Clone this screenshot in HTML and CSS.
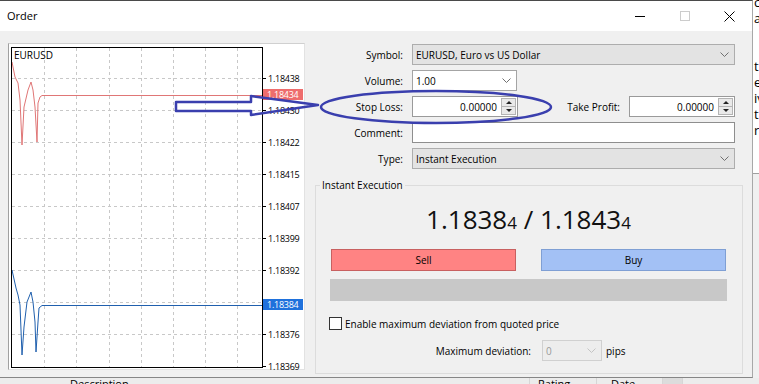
FILE: index.html
```html
<!DOCTYPE html>
<html>

<head>
    <title>Order</title>
    <meta charset=utf-8>
    <meta name=viewport content="width=device-width, initial-scale=1">

    <link rel="stylesheet" href="styles.css">
</head>

<body>
    <div class="desktop">
        <div class="dialog">
            <div class="titlebar">
                <span class="title">Order</span>
                <div class="caption">
                    <span class="cap-btn">
                        <svg width="10" height="10" viewBox="0 0 10 10"><path d="M0 5.5h10" stroke="#000" stroke-width="1"/></svg>
                    </span>
                    <span class="cap-btn">
                        <svg width="10" height="10" viewBox="0 0 10 10"><rect x="0.5" y="0.5" width="9" height="9" fill="none" stroke="#cccccc"/></svg>
                    </span>
                    <span class="cap-btn">
                        <svg width="11" height="11" viewBox="0 0 11 11"><path d="M0.5 0.5l10 10M10.5 0.5l-10 10" stroke="#000" stroke-width="1"/></svg>
                    </span>
                </div>
            </div>

            <div class="content">
                <div class="chart-panel">
                    <div class="chart-frame">
                        <svg class="chart" width="252" height="321" viewBox="0 0 252 321">
                            <g stroke="#c8c8c8" stroke-dasharray="3 3" stroke-width="1">
                                <path d="M33.5 1v319M65.5 1v319M98.5 1v319M130.5 1v319M162.5 1v319M194.5 1v319M226.5 1v319"/>
                                <path d="M1 31.5h250M1 63.5h250M1 95.5h250M1 127.5h250M1 159.5h250M1 191.5h250M1 223.5h250M1 255.5h250M1 287.5h250"/>
                            </g>
                            <polyline fill="none" stroke="#e07676" stroke-width="1"
                                points="1,15 4,30 7,36 9,53 11,98 13,60 17,43 20,35 22,43 24,60 26,95 27,56 29,50 31,48.5 251,48.5"/>
                            <polyline fill="none" stroke="#2060ae" stroke-width="1"
                                points="1,223 5,241 7,248 9,258 11,308 13,280 16,255 20,245 22,255 24,275 25,305 27,275 28,261 31,258.5 251,258.5"/>
                            <rect x="0.5" y="0.5" width="251" height="320" fill="none" stroke="#000"/>
                        </svg>
                        <span class="symbol-name">EURUSD</span>
                    </div>
                    <div class="price-axis">
                        <div class="tick-label"><i></i>1.18438</div>
                        <div class="tick-label"><i></i>1.18430</div>
                        <div class="tick-label"><i></i>1.18422</div>
                        <div class="tick-label"><i></i>1.18415</div>
                        <div class="tick-label"><i></i>1.18407</div>
                        <div class="tick-label"><i></i>1.18399</div>
                        <div class="tick-label"><i></i>1.18392</div>
                        <div class="tick-label"><i></i>1.18384</div>
                        <div class="tick-label"><i></i>1.18376</div>
                        <div class="tick-label"><i></i>1.18369</div>
                        <span class="tag tag-ask">1.18434</span>
                        <span class="tag tag-bid">1.18384</span>
                    </div>
                </div>

                <div class="order-form">
                    <div class="fields">
                        <span class="lbl">Symbol:</span>
                        <div class="combo">
                            <span>EURUSD, Euro vs US Dollar</span>
                            <svg class="chev" width="9" height="5" viewBox="0 0 9 5"><path d="M0.5 0.5l4 4 4-4" fill="none" stroke="#707070"/></svg>
                        </div>

                        <span class="lbl">Volume:</span>
                        <div class="combo combo-edit volume">
                            <span>1.00</span>
                            <svg class="chev" width="9" height="5" viewBox="0 0 9 5"><path d="M0.5 0.5l4 4 4-4" fill="none" stroke="#707070"/></svg>
                        </div>

                        <span class="lbl">Stop Loss:</span>
                        <div class="pair-row">
                            <div class="spin-edit">
                                <span class="value">0.00000</span>
                                <div class="spinner"><span class="spin-btn"><b class="up"></b></span><span class="spin-btn"><b class="down"></b></span></div>
                            </div>
                            <div class="tp-group">
                                <span class="lbl">Take Profit:</span>
                                <div class="spin-edit">
                                    <span class="value">0.00000</span>
                                    <div class="spinner"><span class="spin-btn"><b class="up"></b></span><span class="spin-btn"><b class="down"></b></span></div>
                                </div>
                            </div>
                        </div>

                        <span class="lbl">Comment:</span>
                        <div class="edit"></div>

                        <span class="lbl">Type:</span>
                        <div class="combo">
                            <span>Instant Execution</span>
                            <svg class="chev" width="9" height="5" viewBox="0 0 9 5"><path d="M0.5 0.5l4 4 4-4" fill="none" stroke="#707070"/></svg>
                        </div>
                    </div>

                    <fieldset class="exec-group">
                        <legend>Instant Execution</legend>
                        <div class="quote">1.1838<small>4</small> / 1.1843<small>4</small></div>
                        <div class="trade-buttons">
                            <div class="btn btn-sell">Sell</div>
                            <div class="btn btn-buy">Buy</div>
                        </div>
                        <div class="status-bar"></div>
                        <div class="check-row"><span class="checkbox"></span>Enable maximum deviation from quoted price</div>
                        <div class="deviation-row">
                            <span class="dev-label">Maximum deviation:</span>
                            <div class="combo combo-off">
                                <span>0</span>
                                <svg class="chev" width="9" height="5" viewBox="0 0 9 5"><path d="M0.5 0.5l4 4 4-4" fill="none" stroke="#c4c4c4"/></svg>
                            </div>
                            <span>pips</span>
                        </div>
                    </fieldset>
                </div>
            </div>
        </div>

        <div class="side-window">
            <div class="side-doc">c<br>a<br><br><br>t<br>e<br>iv<br>tc<br>rr</div>
        </div>

        <div class="bottom-window">
            <span class="col col-desc">Description</span>
            <span class="col col-rating">Rating</span>
            <span class="col col-date">Date &#8964;</span>
            <span class="col col-box"></span>
        </div>

        <!-- hand drawn marks over the screenshot -->
        <svg class="marks" width="759" height="384" viewBox="0 0 759 384">
            <polygon points="176,102 251,102 251,96 318,105 251,115 251,111 176,111"
                fill="none" stroke="#3a3fae" stroke-width="2.5" stroke-linejoin="round"/>
            <ellipse cx="436" cy="107" rx="115" ry="16" fill="none" stroke="#3a3fae" stroke-width="2.5"/>
        </svg>
    </div>
</body>

</html>
```

FILE: styles.css
```css
body {
    margin: 0;
    font-family: "Open Sans", "Noto Sans", sans-serif;
    font-size: 10px;
    color: #000;
    background: #f0f0f0;
}

.desktop {
    position: relative;
    width: 759px;
    height: 384px;
    overflow: hidden;
    display: grid;
    grid-template-columns: 753px 6px;
    grid-template-rows: 378px 6px;
}

/* dialog window */
.dialog {
    box-sizing: border-box;
    border-top: 1px solid #4a4a4a;
    border-right: 1px solid #a8a8a8;
    border-bottom: 1px solid #868686;
    display: flex;
    flex-direction: column;
    background: #f0f0f0;
}

.titlebar {
    height: 30px;
    background: #fff;
    display: flex;
    align-items: center;
    justify-content: space-between;
    padding-left: 7px;
}

.title {
    font-size: 11px;
    line-height: 14px;
}

.caption {
    display: flex;
    height: 100%;
}

.cap-btn {
    width: 45px;
    height: 100%;
    display: flex;
    align-items: center;
    justify-content: center;
}

.content {
    flex: 1;
    display: flex;
    padding: 12px 0 0 8px;
}

/* chart */
.chart-panel {
    box-sizing: border-box;
    width: 297px;
    height: 327px;
    background: #fff;
    border: 1px solid #e2e2e2;
    border-left-color: #a0a0a0;
    border-top-color: #d0d0d0;
    display: flex;
    padding: 3px 0 0 2px;
}

.chart-frame {
    position: relative;
    width: 252px;
    height: 321px;
}

.chart {
    display: block;
}

.symbol-name {
    position: absolute;
    left: 3px;
    top: 2px;
    font-size: 10px;
    line-height: 12px;
}

.price-axis {
    position: relative;
    flex: 1;
    padding-top: 15px;
    font-size: 9px;
    letter-spacing: -0.25px;
}

.tick-label {
    height: 32px;
    display: flex;
    align-items: center;
    gap: 2px;
    line-height: 11px;
}

.tick-label i {
    width: 3px;
    height: 1px;
    background: #000;
}

.tag {
    position: absolute;
    left: 0;
    width: 40px;
    height: 11px;
    line-height: 11px;
    padding-left: 4px;
    box-sizing: border-box;
    color: #fff;
}

.tag-ask {
    top: 42px;
    background: #ee6d6d;
}

.tag-bid {
    top: 252px;
    background: #1f71dc;
}

/* form */
.order-form {
    margin-left: 10px;
    margin-top: 1px;
    width: 428px;
}

.fields {
    display: grid;
    grid-template-columns: 88px 323px;
    grid-auto-rows: 21px;
    column-gap: 9px;
    row-gap: 5px;
    align-items: center;
}

.lbl {
    text-align: right;
    line-height: 14px;
}

.combo {
    box-sizing: border-box;
    height: 21px;
    border: 1px solid #adadad;
    background: #e3e3e3;
    display: flex;
    align-items: center;
    justify-content: space-between;
    padding: 0 5px 0 3px;
    line-height: 14px;
}

.combo-edit {
    background: #fff;
    border-color: #a4a4a4;
}

.volume {
    width: 105px;
}

.chev {
    display: block;
}

.edit {
    box-sizing: border-box;
    height: 21px;
    border: 1px solid #8e8e8e;
    background: #fff;
}

.pair-row {
    display: flex;
    justify-content: space-between;
    align-items: center;
}

.tp-group {
    display: flex;
    align-items: center;
    gap: 9px;
}

.spin-edit {
    box-sizing: border-box;
    width: 106px;
    height: 21px;
    border: 1px solid #9a9a9a;
    background: #fff;
    display: flex;
    align-items: center;
}

.spin-edit .value {
    flex: 1;
    text-align: right;
    padding-right: 4px;
    line-height: 14px;
}

.spinner {
    width: 15px;
    height: 17px;
    margin-right: 1px;
    display: flex;
    flex-direction: column;
}

.spin-btn {
    flex: 1;
    box-sizing: border-box;
    border: 1px solid #b4b4b4;
    background: #e9e9e9;
    display: flex;
    align-items: center;
    justify-content: center;
}

.spin-btn + .spin-btn {
    border-top: 0;
}

.up {
    width: 0;
    height: 0;
    border-left: 3px solid transparent;
    border-right: 3px solid transparent;
    border-bottom: 3px solid #222;
}

.down {
    width: 0;
    height: 0;
    border-left: 3px solid transparent;
    border-right: 3px solid transparent;
    border-top: 3px solid #222;
}

/* instant execution group */
.exec-group {
    margin: 9px 0 0 0;
    padding: 12px 16px 12px 15px;
    border: 1px solid #dcdcdc;
    min-width: 0;
}

.exec-group legend {
    margin-left: -11px;
    padding: 0 2px;
    line-height: 14px;
}

.quote {
    text-align: center;
    font-size: 26px;
    line-height: 30px;
    color: #111;
}

.quote small {
    font-size: 17px;
}

.trade-buttons {
    margin-top: 11px;
    display: flex;
    justify-content: space-between;
}

.btn {
    box-sizing: border-box;
    width: 185px;
    height: 22px;
    display: flex;
    align-items: center;
    justify-content: center;
    line-height: 14px;
}

.btn-sell {
    background: #ff8383;
    border: 1px solid #c86060;
}

.btn-buy {
    background: #a3c1f5;
    border: 1px solid #7f9fd4;
}

.status-bar {
    margin: 8px -1px 0;
    height: 22px;
    background: #c8c8c8;
}

.check-row {
    margin: 16px 0 0 -2px;
    height: 13px;
    display: flex;
    align-items: center;
    gap: 3px;
    line-height: 14px;
}

.checkbox {
    box-sizing: border-box;
    width: 13px;
    height: 13px;
    border: 1px solid #333;
    background: #fff;
}

.deviation-row {
    margin-top: 10px;
    height: 21px;
    display: flex;
    align-items: center;
    line-height: 14px;
}

.dev-label {
    width: 200px;
    text-align: right;
    margin-right: 11px;
}

.combo-off {
    width: 60px;
    margin-right: 4px;
    border-color: #d0d0d0;
    background: #ededed;
    color: #9a9a9a;
}

/* windows behind the dialog */
.side-window {
    background: #f0f0f0;
    overflow: hidden;
}

.side-doc {
    height: 180px;
    box-sizing: border-box;
    border-bottom: 1px solid #a0a0a0;
    background: #fff;
    font-size: 13px;
    line-height: 16px;
    margin-top: -6px;
    padding-left: 1px;
}

.bottom-window {
    grid-column: 1 / 3;
    background: #ececec;
    display: flex;
    overflow: hidden;
    font-size: 11px;
    line-height: 14px;
}

.col {
    box-sizing: border-box;
    border-right: 1px solid #d6d6d6;
    margin-top: -1px;
}

.col-desc {
    width: 530px;
    padding-left: 70px;
}

.col-rating {
    width: 67px;
    padding-left: 8px;
}

.col-date {
    width: 66px;
    padding-left: 14px;
}

.col-box {
    width: 20px;
    background: #dcdcdc;
}

.marks {
    position: absolute;
    left: 0;
    top: 0;
    pointer-events: none;
}
```
